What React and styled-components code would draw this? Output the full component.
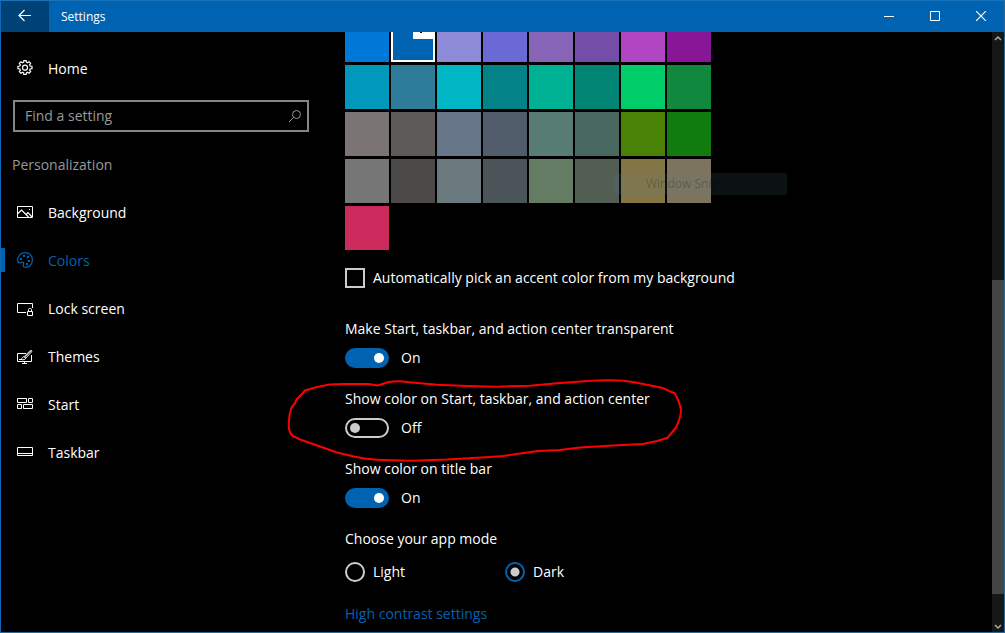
import React, { useState } from "react";
import styled, { createGlobalStyle } from "styled-components";

const accent = "#0063b1";

const GlobalStyle = createGlobalStyle`
  *, *::before, *::after { box-sizing: border-box; }
  body {
    margin: 0;
    background: #000;
    color: #fff;
    font: 14px/20px "Open Sans", "Noto Sans", sans-serif;
  }
  button, input { font: inherit; color: inherit; }
`;

const Window = styled.div`
  display: flex;
  flex-direction: column;
  min-height: 100vh;
  border: 1px solid;
  border-color: #1a72b8 #246b9b #246b9b #0f69b8;
`;

const TitleBar = styled.header`
  display: flex;
  height: 31px;
  background: ${accent};
`;

const BarButton = styled.button`
  display: flex;
  align-items: center;
  justify-content: center;
  width: ${(p) => (p.$back ? 48 : 46)}px;
  padding: 0 0 1px;
  border: 0;
  background: ${(p) => (p.$back ? "#004275" : "transparent")};
`;

const Title = styled.h1`
  flex: 1;
  margin: 0;
  padding-left: 12px;
  font-size: 12px;
  line-height: 31px;
  font-weight: 400;
`;

const Body = styled.div`
  display: flex;
  flex: 1;
`;

const Sidebar = styled.nav`
  flex: none;
  width: 320px;
  padding-top: 13px;
`;

const NavLink = styled.a`
  display: flex;
  align-items: center;
  gap: 15px;
  height: 48px;
  padding-left: ${(p) => (p.$active ? 12 : 16)}px;
  border-left: ${(p) => (p.$active ? 4 : 0)}px solid ${accent};
  border-image: linear-gradient(transparent 11px, ${accent} 11px, ${accent} 35px, transparent 35px) 0 0 0 4;
  color: ${(p) => (p.$active ? accent : "#fff")};
  text-decoration: none;
  svg { margin-bottom: 2px; }
`;

const SearchBox = styled.label`
  display: flex;
  align-items: center;
  height: 32px;
  margin: 7px 12px 0;
  padding: 0 5px 0 10px;
  border: 2px solid #858585;
  color: #999;
`;

const SearchInput = styled.input`
  flex: 1;
  min-width: 0;
  padding: 0;
  border: 0;
  outline: 0;
  background: transparent;
  &::placeholder { color: #999; opacity: 1; }
`;

const Category = styled.h2`
  margin: 23px 11px 14px;
  font-size: 14px;
  line-height: 20px;
  font-weight: 400;
  color: #999;
`;

const Pane = styled.main`
  flex: 1;
  min-width: 0;
  padding-left: 24px;
  overflow-x: visible;
  overflow-y: clip;
`;

const Palette = styled.div`
  position: relative;
  display: grid;
  grid-template-columns: repeat(8, 44px);
  gap: 3px 2px;
  margin-top: -14px;
`;

const Swatch = styled.button`
  display: flex;
  justify-content: flex-end;
  align-items: flex-start;
  height: 44px;
  padding: 0;
  border: ${(p) => (p.$selected ? "2px solid #fff" : "0")};
  background: ${(p) => p.$color};
`;

const SnipGhost = styled.div`
  position: absolute;
  left: 269px;
  top: 155px;
  width: 173px;
  height: 22px;
  padding-left: 32px;
  background: rgba(95, 130, 145, 0.13);
  color: rgba(0, 0, 0, 0.24);
  font-size: 12px;
  line-height: 22px;
  pointer-events: none;
`;

const Choice = styled.label`
  display: flex;
  align-items: center;
  gap: 8px;
  height: 20px;
`;

const CheckRow = styled.div`
  margin: 18px 0 31px;
`;

const Tick = styled.input`
  appearance: none;
  width: 20px;
  height: 20px;
  margin: 0;
  border: 2px solid #ccc;
  &:checked { background: ${accent}; border-color: ${accent}; }
`;

const Radio = styled.input`
  appearance: none;
  width: 20px;
  height: 20px;
  margin: 0;
  border: 2px solid #ccc;
  border-radius: 50%;
  &:checked {
    border-color: ${accent};
    background: radial-gradient(circle, #ccc 4px, transparent 5px);
  }
`;

const Setting = styled.section`
  position: relative;
  margin-bottom: 21px;
`;

const SettingName = styled.h3`
  margin: 0;
  font-size: 14px;
  line-height: 20px;
  font-weight: 400;
`;

const ToggleRow = styled.label`
  display: flex;
  align-items: center;
  gap: 12px;
  height: 20px;
  margin-top: 9px;
`;

const Toggle = styled.input`
  appearance: none;
  display: flex;
  align-items: center;
  width: 44px;
  height: 20px;
  margin: 0;
  padding: 0 3px;
  border: 2px solid #ccc;
  border-radius: 10px;
  &::before {
    content: "";
    width: 10px;
    height: 10px;
    border-radius: 50%;
    background: #ccc;
  }
  &:checked {
    justify-content: flex-end;
    border-color: ${accent};
    background: ${accent};
  }
  &:checked::before { background: #fff; }
`;

const Scribble = styled.svg`
  position: absolute;
  left: -65px;
  top: -19px;
  pointer-events: none;
`;

const ModeRow = styled.div`
  display: grid;
  grid-template-columns: 160px 160px;
  margin: 13px 0 22px;
`;

const TextLink = styled.a`
  color: ${accent};
  text-decoration: none;
`;

const ScrollBar = styled.div`
  display: flex;
  flex-direction: column;
  flex: none;
  width: 12px;
  background: #171717;
`;

const ScrollButton = styled.button`
  display: flex;
  align-items: center;
  justify-content: center;
  height: 13px;
  padding: 0;
  border: 0;
  background: transparent;
  color: #aaa;
`;

const ScrollPart = styled.div`
  flex: ${(p) => p.$share} 0 0;
  background: ${(p) => (p.$thumb ? "#444" : "transparent")};
`;

function Icon({ children, size = 16, ...rest }) {
  return (
    <svg width={size} height={size} viewBox={`0 0 ${size} ${size}`} fill="none" stroke="currentColor" aria-hidden="true" {...rest}>
      {children}
    </svg>
  );
}

const GearIcon = () => (
  <Icon strokeLinejoin="round">
    <path
      strokeWidth="1.2"
      d="M6.600 2.300 6.800.6h2.400l.2 1.700 1.200.5 1.400-1.100 1.700 1.700-1.100 1.400.5 1.200 1.900.3v2.400l-1.900.3-.5 1.200 1.100 1.400-1.700 1.700-1.400-1.100-1.200.5-.2 1.700H6.800l-.2-1.700-1.200-.5L4 13.300l-1.700-1.700 1.100-1.400L2.900 9 .9 8.700V6.300L2.900 6l.5-1.200-1.100-1.400L4 1.700l1.400 1.100z"
    />
    <circle cx="8" cy="7.700" r="2.500" strokeWidth="1.200" />
  </Icon>
);

const PictureIcon = () => (
  <Icon>
    <path d="M.5 2.500h15v11H.5z" />
    <path d="M1 9.500 4.500 6l7 7M9 10.500l2-2 4 4.500" strokeWidth="1.200" />
    <path d="M12 5h1v1h-1z" fill="currentColor" stroke="none" />
  </Icon>
);

const PaletteIcon = () => (
  <Icon>
    <path
      strokeWidth="1.200"
      d="M.6 8.200C.6 3.600 4 .6 8.200.6c4.200 0 7.200 3.100 7.200 7.100 0 4.500-3 7.700-7 7.700-1.900 0-2.300-1-2-2.400.3-1.500.6-2.300-.3-2.800-1.100-.6-2.200.5-3.500.5C1.200 10.700.6 9.700.6 8.200z"
    />
    <path d="M3 6h2v2H3zM6 3h2v2H6zM10 4h2v2h-2zM11 8h2v2h-2zM9 11h2v2H9z" fill="currentColor" stroke="none" />
  </Icon>
);

const LockScreenIcon = () => (
  <Icon>
    <path d="M9 12.500H.5v-9h15V8M10.500 11.500h5v4h-5zM11.500 11V9.500q0-1 1-1h1q1 0 1 1V11" />
  </Icon>
);

const ThemesIcon = () => (
  <Icon>
    <path d="M9 5.500H.5v8h14V7M7.500 14v2M5 15.500h5M2 11.500h3" />
    <path d="m7.200 8.600 6-6c1-.8 2.100.2 1.400 1.300l-5.900 6.200M7.200 8.600c-1.700-.1-2 1.700-3.300 2.800 2.500.8 4.800.2 4.800-1.300z" />
    <path d="m7 10 7-7" strokeWidth=".7" />
  </Icon>
);

const StartIcon = () => (
  <Icon>
    <path d="M.5 2.500h9v4h-9zM11.500 2.500h4v4h-4zM.5 8.500h4v4h-4zM6.500 8.500h9v4h-9z" />
  </Icon>
);

const TaskbarIcon = () => (
  <Icon>
    <path d="M.5 3.500h15v8H.5zM1 9.500h14" />
  </Icon>
);

const SearchIcon = () => (
  <Icon size={14}>
    <circle cx="8.500" cy="5.500" r="4" />
    <path d="M5.700 8.300 1 13" />
  </Icon>
);

const navItems = [
  ["Background", PictureIcon],
  ["Colors", PaletteIcon],
  ["Lock screen", LockScreenIcon],
  ["Themes", ThemesIcon],
  ["Start", StartIcon],
  ["Taskbar", TaskbarIcon],
];

const colors = [
  "#0078d7", "#0063b1", "#8e8cd8", "#6b69d6", "#8764b8", "#744da9", "#b146c2", "#881798",
  "#0099bc", "#2d7d9a", "#00b7c3", "#038387", "#00b294", "#018574", "#00cc6a", "#10893e",
  "#7a7574", "#5d5a58", "#68768a", "#515c6b", "#567c73", "#486860", "#498205", "#107c10",
  "#767676", "#4c4a48", "#69797e", "#4a5459", "#647c64", "#525e54", "#847545", "#7e735f",
  "#cb2a5d",
];

function ToggleSetting({ name, initial, children }) {
  const [on, setOn] = useState(initial);
  return (
    <Setting>
      <SettingName>{name}</SettingName>
      <ToggleRow>
        <Toggle type="checkbox" role="switch" aria-label={name} checked={on} onChange={() => setOn(!on)} />
        {on ? "On" : "Off"}
      </ToggleRow>
      {children}
    </Setting>
  );
}

export default function App() {
  const [selected, setSelected] = useState(1);
  return (
    <Window>
      <GlobalStyle />
      <TitleBar>
        <BarButton $back aria-label="Back">
          <Icon stroke="#fff"><path d="M14 7.500H2.500M7.500 2 2 7.500 7.500 13" strokeWidth="1.200" /></Icon>
        </BarButton>
        <Title>Settings</Title>
        <BarButton aria-label="Minimize"><Icon size={10}><path d="M0 5.500h10" /></Icon></BarButton>
        <BarButton aria-label="Maximize"><Icon size={10}><path d="M.5.5h9v9h-9z" /></Icon></BarButton>
        <BarButton aria-label="Close"><Icon size={10}><path d="m0 0 10 10M10 0 0 10" strokeWidth="1.200" /></Icon></BarButton>
      </TitleBar>
      <Body>
        <Sidebar>
          <NavLink href="#home"><GearIcon />Home</NavLink>
          <SearchBox>
            <SearchInput type="text" placeholder="Find a setting" aria-label="Find a setting" />
            <SearchIcon />
          </SearchBox>
          <Category>Personalization</Category>
          {navItems.map(([label, Glyph]) => (
            <NavLink key={label} href={`#${label}`} $active={label === "Colors"}>
              <Glyph />
              {label}
            </NavLink>
          ))}
        </Sidebar>
        <Pane>
          <Palette>
            {colors.map((c, i) => (
              <Swatch key={c} $color={c} $selected={i === selected} aria-label={c} onClick={() => setSelected(i)}>
                {i === selected && (
                  <Icon size={20} stroke="#000">
                    <path d="M0 0h20v19H0z" fill="#fff" stroke="none" />
                    <path d="m4 9 4 4 8-9" />
                  </Icon>
                )}
              </Swatch>
            ))}
            <SnipGhost>Window Snip</SnipGhost>
          </Palette>
          <CheckRow>
            <Choice><Tick type="checkbox" />Automatically pick an accent color from my background</Choice>
          </CheckRow>
          <ToggleSetting name="Make Start, taskbar, and action center transparent" initial />
          <ToggleSetting name="Show color on Start, taskbar, and action center" initial={false}>
            <Scribble width="410" height="100" viewBox="280 370 410 100" fill="none" stroke="#f00" strokeWidth="2" strokeLinejoin="round" aria-hidden="true">
              <path d="M378 385.500 368 384H343L330 384.500 317 387 305 390.500 302.500 393.500 296.500 399.500 294.500 404 291.500 407.500Q288 417 289 428.500 290 434 293 436L300 439.500 310 443 320 446.500 337 452.500 355 456.700Q366 459 377 459.700T413 460.700L447 459.500 490 457 503 456 538 451 560 450 580 447.500 613 445.500 643 444 657 441 667.700 437.700 676 427.500Q682 415 680.700 408.500T675 393.500L661.700 387.700 637 382.700Q623 380 607 380.300T560 383L530 385.700 497 386.700 467 386 437 384.700 407 382Q397 380.500 387 382.500L378 385.500" />
            </Scribble>
          </ToggleSetting>
          <ToggleSetting name="Show color on title bar" initial />
          <SettingName>Choose your app mode</SettingName>
          <ModeRow>
            <Choice><Radio type="radio" name="mode" />Light</Choice>
            <Choice><Radio type="radio" name="mode" defaultChecked />Dark</Choice>
          </ModeRow>
          <TextLink href="#contrast">High contrast settings</TextLink>
        </Pane>
        <ScrollBar>
          <ScrollButton aria-label="Scroll up"><Icon size={8}><path d="m1 5 3-3 3 3" strokeWidth="1.500" /></Icon></ScrollButton>
          <ScrollPart $share={235} />
          <ScrollPart $share={314} $thumb />
          <ScrollPart $share={25} />
          <ScrollButton aria-label="Scroll down"><Icon size={8}><path d="m1 3 3 3 3-3" strokeWidth="1.500" /></Icon></ScrollButton>
        </ScrollBar>
      </Body>
    </Window>
  );
}
